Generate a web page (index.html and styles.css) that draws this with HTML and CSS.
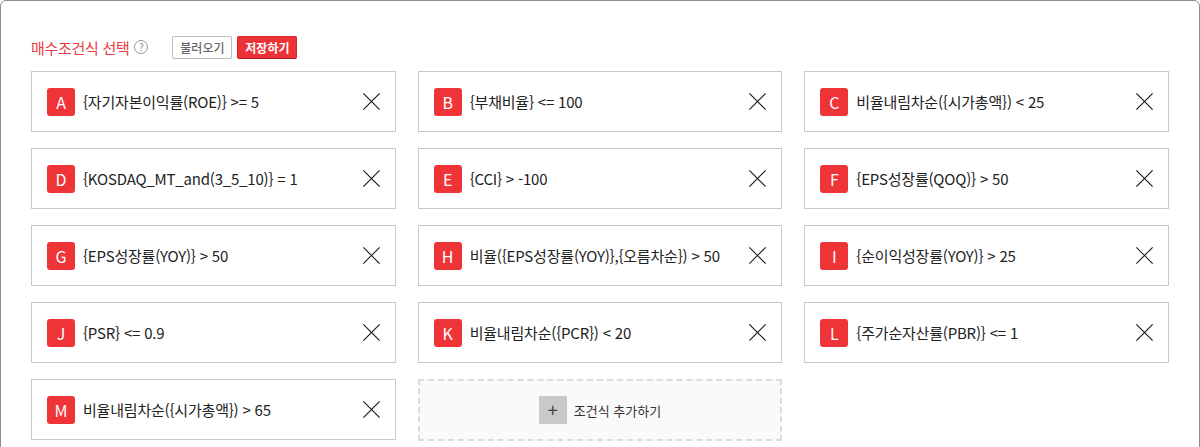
FILE: index.html
```html
<!DOCTYPE html>
<html lang="ko">
<head>
  <meta charset="UTF-8">
  <meta name="viewport" content="width=device-width, initial-scale=1.0">
  <title>매수조건식 선택</title>
  <link rel="stylesheet" href="styles.css">
</head>
<body>
  <div class="panel">
    <div class="panel-head">
      <h3 class="title">매수조건식 선택</h3>
      <span class="help">?</span>
      <div class="head-btns">
        <button class="btn">불러오기</button>
        <button class="btn btn-red">저장하기</button>
      </div>
    </div>

    <div class="cond-grid">
      <div class="cond"><span class="badge">A</span><span class="cond-text">{자기자본이익률(ROE)} &gt;= 5</span><span class="del"></span></div>
      <div class="cond"><span class="badge">B</span><span class="cond-text">{부채비율} &lt;= 100</span><span class="del"></span></div>
      <div class="cond"><span class="badge">C</span><span class="cond-text">비율내림차순({시가총액}) &lt; 25</span><span class="del"></span></div>
      <div class="cond"><span class="badge">D</span><span class="cond-text">{KOSDAQ_MT_and(3_5_10)} = 1</span><span class="del"></span></div>
      <div class="cond"><span class="badge">E</span><span class="cond-text">{CCI} &gt; -100</span><span class="del"></span></div>
      <div class="cond"><span class="badge">F</span><span class="cond-text">{EPS성장률(QOQ)} &gt; 50</span><span class="del"></span></div>
      <div class="cond"><span class="badge">G</span><span class="cond-text">{EPS성장률(YOY)} &gt; 50</span><span class="del"></span></div>
      <div class="cond"><span class="badge">H</span><span class="cond-text">비율({EPS성장률(YOY)},{오름차순}) &gt; 50</span><span class="del"></span></div>
      <div class="cond"><span class="badge">I</span><span class="cond-text">{순이익성장률(YOY)} &gt; 25</span><span class="del"></span></div>
      <div class="cond"><span class="badge">J</span><span class="cond-text">{PSR} &lt;= 0.9</span><span class="del"></span></div>
      <div class="cond"><span class="badge">K</span><span class="cond-text">비율내림차순({PCR}) &lt; 20</span><span class="del"></span></div>
      <div class="cond"><span class="badge">L</span><span class="cond-text">{주가순자산률(PBR)} &lt;= 1</span><span class="del"></span></div>
      <div class="cond"><span class="badge">M</span><span class="cond-text">비율내림차순({시가총액}) &gt; 65</span><span class="del"></span></div>
      <div class="cond-add"><span class="plus">+</span><span>조건식 추가하기</span></div>
    </div>
  </div>
</body>
</html>
```

FILE: styles.css
```css
* {
  margin: 0;
  padding: 0;
  box-sizing: border-box;
}

body {
  font-family: "Noto Sans CJK KR", "Noto Sans", sans-serif;
  background: #fff;
  color: #222;
}

.panel {
  width: 1200px;
  min-height: 470px;
  border: 1px solid #8c8c8c;
  border-radius: 6px 6px 0 0;
  padding: 34px 30px 30px;
}

.panel-head {
  display: flex;
  align-items: center;
  height: 24px;
  margin-bottom: 12px;
}

.title {
  font-size: 15px;
  font-weight: normal;
  color: #ea3a3f;
  letter-spacing: -0.3px;
}

.help {
  width: 14px;
  height: 14px;
  margin-left: 5px;
  border: 1px solid #999;
  border-radius: 50%;
  font-size: 10px;
  line-height: 12px;
  text-align: center;
  color: #888;
}

.head-btns {
  display: flex;
  gap: 5px;
  margin-left: 24px;
}

.btn {
  width: 60px;
  height: 23px;
  border: 1px solid #bbb;
  border-radius: 2px;
  background: #fff;
  color: #666;
  font-family: inherit;
  font-size: 12px;
  font-weight: 500;
  cursor: pointer;
}

.btn-red {
  background: #ec3236;
  border-color: #d52a2e;
  border-bottom-color: #a91f22;
  color: #fff;
  font-weight: bold;
}

.cond-grid {
  display: grid;
  grid-template-columns: repeat(3, 1fr);
  column-gap: 22px;
  row-gap: 16px;
}

.cond {
  display: flex;
  align-items: center;
  height: 61px;
  border: 1px solid #c9c9c9;
  padding: 0 15px;
}

.badge {
  width: 28px;
  height: 28px;
  border-radius: 3px;
  background: #ef3438;
  color: #fff;
  font-size: 16px;
  line-height: 28px;
  text-align: center;
  flex-shrink: 0;
}

.cond-text {
  flex: 1;
  margin-left: 8px;
  font-size: 15px;
  color: #222;
  letter-spacing: -0.2px;
}

/* 삭제 아이콘 */
.del {
  position: relative;
  width: 17px;
  height: 17px;
  cursor: pointer;
}

.del::before,
.del::after {
  content: "";
  position: absolute;
  left: -3px;
  top: 8px;
  width: 23px;
  height: 1px;
  background: #111;
  transform: rotate(45deg);
}

.del::after {
  transform: rotate(-45deg);
}

.cond-add {
  display: flex;
  align-items: center;
  justify-content: center;
  height: 62px;
  border: 2px dashed #dcdcdc;
  background: #fafafa;
  font-size: 13px;
  color: #333;
  cursor: pointer;
}

.plus {
  width: 28px;
  height: 28px;
  margin-right: 7px;
  background: #c9c9c9;
  color: #444;
  font-size: 18px;
  line-height: 27px;
  text-align: center;
}
```
